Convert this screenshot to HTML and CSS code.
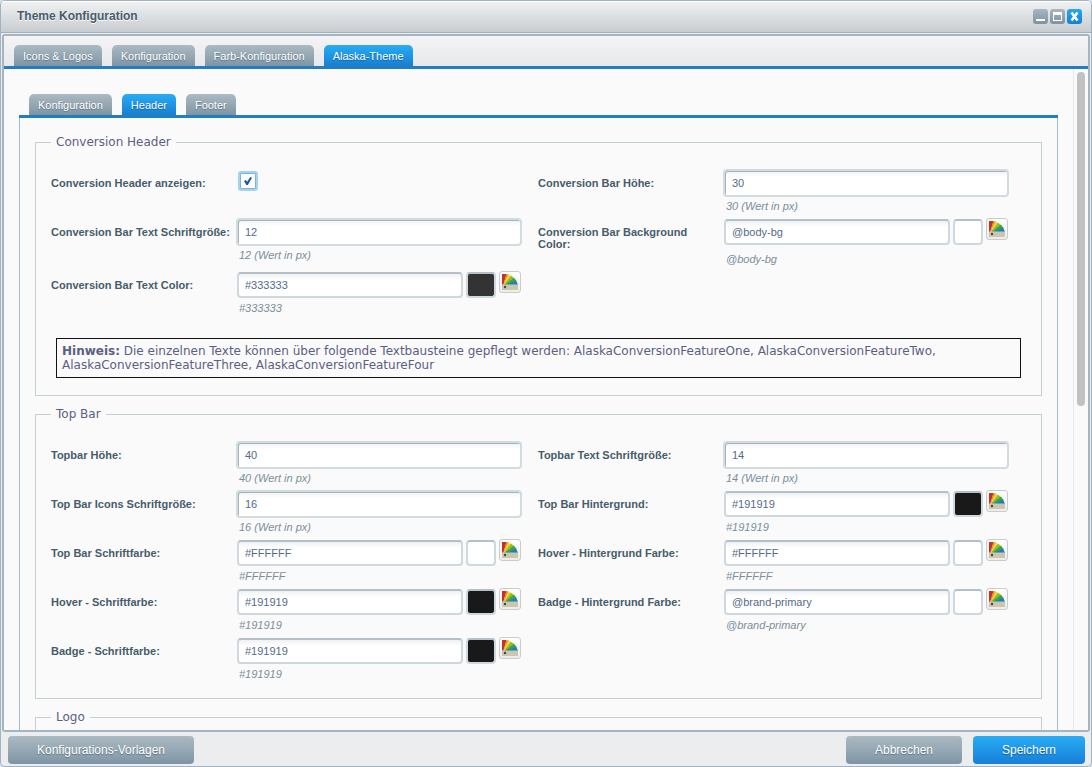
FILE: index.html
```html
<!DOCTYPE html>
<html lang="de">
<head>
<meta charset="utf-8">
<title>Theme Konfiguration</title>
<link rel="stylesheet" href="styles.css">
</head>
<body>
<svg class="defs" aria-hidden="true">
  <symbol id="fan" viewBox="0 0 16 16">
    <path d="M0 0h4.500L1 12H0z" fill="#c9302b"/>
    <path d="M4.500 0 7 .8 1 12z" fill="#e9841f"/>
    <path d="M6 .4 9.500 2 1 12z" fill="#f3d52b"/>
    <path d="M9 1.800 12.500 4.200 1 12z" fill="#8cbf2c"/>
    <path d="M12 3.800 14.500 7 1 12z" fill="#3fa044"/>
    <path d="M14.200 6.500 16 11 1 12z" fill="#1f7fb8"/>
    <path d="M0 10.500h16V16H0z" fill="#cbc6ad"/>
    <circle cx="3" cy="13" r="1.200" fill="#444"/>
  </symbol>
</svg>
<div class="window">
  <header class="titlebar">
    <h1 class="title">Theme Konfiguration</h1>
    <div class="tools">
      <button class="tool" aria-label="Minimieren"><svg viewBox="0 0 15 15"><path d="M3 10h9v2H3z" fill="#fff"/></svg></button>
      <button class="tool" aria-label="Maximieren"><svg viewBox="0 0 15 15"><path d="M3 3h9v9H3zM4 6v5h7V6z" fill="#fff" fill-rule="evenodd"/></svg></button>
      <button class="tool tool-close" aria-label="Schließen"><svg viewBox="0 0 15 15"><path d="M4.500 3.500l6 8M10.500 3.500l-6 8" stroke="#fff" stroke-width="2.600"/></svg></button>
    </div>
  </header>
  <main class="frame">
    <nav class="tabs tabs-main">
      <button class="tab">Icons &amp; Logos</button>
      <button class="tab">Konfiguration</button>
      <button class="tab">Farb-Konfiguration</button>
      <button class="tab tab-active">Alaska-Theme</button>
    </nav>
    <div class="viewport">
      <div class="content">
        <nav class="tabs tabs-sub">
          <button class="tab">Konfiguration</button>
          <button class="tab tab-active">Header</button>
          <button class="tab">Footer</button>
        </nav>
        <div class="panel">
          <fieldset class="group">
            <legend>Conversion Header</legend>
            <div class="fields">
              <div class="field"><label for="f1">Conversion Header anzeigen:</label><div class="control"><input class="check" id="f1" type="checkbox" checked></div></div>
              <div class="field"><label for="f2">Conversion Bar Höhe:</label><div class="control"><input class="text" id="f2" type="text" value="30"></div><p class="help">30 (Wert in px)</p></div>
              <div class="field"><label for="f3">Conversion Bar Text Schriftgröße:</label><div class="control"><input class="text" id="f3" type="text" value="12"></div><p class="help">12 (Wert in px)</p></div>
              <div class="field"><label for="f4">Conversion Bar Background Color:</label><div class="control"><input class="text color" id="f4" type="text" value="@body-bg"><span class="swatch"></span><button class="picker" aria-label="Farbe wählen"><svg><use href="#fan"/></svg></button></div><p class="help">@body-bg</p></div>
              <div class="field"><label for="f5">Conversion Bar Text Color:</label><div class="control"><input class="text color" id="f5" type="text" value="#333333"><span class="swatch swatch-gray"></span><button class="picker" aria-label="Farbe wählen"><svg><use href="#fan"/></svg></button></div><p class="help">#333333</p></div>
            </div>
            <p class="note"><b>Hinweis:</b> Die einzelnen Texte können über folgende Textbausteine gepflegt werden: AlaskaConversionFeatureOne, AlaskaConversionFeatureTwo, AlaskaConversionFeatureThree, AlaskaConversionFeatureFour</p>
          </fieldset>
          <fieldset class="group">
            <legend>Top Bar</legend>
            <div class="fields">
              <div class="field"><label for="t1">Topbar Höhe:</label><div class="control"><input class="text" id="t1" type="text" value="40"></div><p class="help">40 (Wert in px)</p></div>
              <div class="field"><label for="t2">Topbar Text Schriftgröße:</label><div class="control"><input class="text" id="t2" type="text" value="14"></div><p class="help">14 (Wert in px)</p></div>
              <div class="field"><label for="t3">Top Bar Icons Schriftgröße:</label><div class="control"><input class="text" id="t3" type="text" value="16"></div><p class="help">16 (Wert in px)</p></div>
              <div class="field"><label for="t4">Top Bar Hintergrund:</label><div class="control"><input class="text color" id="t4" type="text" value="#191919"><span class="swatch swatch-dark"></span><button class="picker" aria-label="Farbe wählen"><svg><use href="#fan"/></svg></button></div><p class="help">#191919</p></div>
              <div class="field"><label for="t5">Top Bar Schriftfarbe:</label><div class="control"><input class="text color" id="t5" type="text" value="#FFFFFF"><span class="swatch"></span><button class="picker" aria-label="Farbe wählen"><svg><use href="#fan"/></svg></button></div><p class="help">#FFFFFF</p></div>
              <div class="field"><label for="t6">Hover - Hintergrund Farbe:</label><div class="control"><input class="text color" id="t6" type="text" value="#FFFFFF"><span class="swatch"></span><button class="picker" aria-label="Farbe wählen"><svg><use href="#fan"/></svg></button></div><p class="help">#FFFFFF</p></div>
              <div class="field"><label for="t7">Hover - Schriftfarbe:</label><div class="control"><input class="text color" id="t7" type="text" value="#191919"><span class="swatch swatch-dark"></span><button class="picker" aria-label="Farbe wählen"><svg><use href="#fan"/></svg></button></div><p class="help">#191919</p></div>
              <div class="field"><label for="t8">Badge - Hintergrund Farbe:</label><div class="control"><input class="text color" id="t8" type="text" value="@brand-primary"><span class="swatch"></span><button class="picker" aria-label="Farbe wählen"><svg><use href="#fan"/></svg></button></div><p class="help">@brand-primary</p></div>
              <div class="field"><label for="t9">Badge - Schriftfarbe:</label><div class="control"><input class="text color" id="t9" type="text" value="#191919"><span class="swatch swatch-dark"></span><button class="picker" aria-label="Farbe wählen"><svg><use href="#fan"/></svg></button></div><p class="help">#191919</p></div>
            </div>
          </fieldset>
          <fieldset class="group group-last">
            <legend>Logo</legend>
          </fieldset>
        </div>
      </div>
      <div class="scrollbar"><div class="thumb"></div></div>
    </div>
  </main>
  <footer class="footer">
    <button class="btn btn-wide">Konfigurations-Vorlagen</button>
    <span class="spacer"></span>
    <button class="btn btn-cancel">Abbrechen</button>
    <button class="btn btn-primary">Speichern</button>
  </footer>
</div>
</body>
</html>
```
FILE: styles.css
```css
* { box-sizing: border-box; }
body {
  margin: 0;
  background: #d3e2ec;
  font-family: "Liberation Sans", Arial, sans-serif;
  font-size: 11px;
}
button, input { font: inherit; margin: 0; }
.defs { display: none; }

.window {
  display: flex;
  flex-direction: column;
  height: 100vh;
  border: 1px solid #a1b3bf;
  border-radius: 5px;
  background: #ebedef;
  overflow: hidden;
}
.titlebar {
  display: flex;
  flex: none;
  align-items: center;
  justify-content: space-between;
  height: 32px;
  padding: 0 9px 2px 16px;
  border-bottom: 1px solid #9fb1bd;
  background: linear-gradient(#f0f1f2, #c8cdd1);
  box-shadow: inset 0 1px #fff;
}
.title { margin: 0; font-size: 12px; line-height: 16px; color: #475c6a; text-shadow: 0 1px #fff; }
.tools { display: flex; gap: 2px; padding-top: 1px; }
.tool {
  width: 15px;
  height: 15px;
  padding: 0;
  border: 0;
  border-radius: 3px;
  background: linear-gradient(#a8b7c0, #7f929e);
}
.tool svg { display: block; width: 15px; height: 15px; }
.tool-close { background: linear-gradient(#25aaf2, #1580d4); }

.frame {
  display: flex;
  flex: 1;
  flex-direction: column;
  min-height: 0;
  margin: 1px 1px 0;
  border: 2px solid #a4b5c1;
  border-radius: 3px;
}
.tabs { display: flex; flex: none; gap: 10px; border-bottom: 3px solid #237dc2; }
.tabs-main { padding: 9px 10px 0; background: linear-gradient(#f4f4f5, #e6e8ea); }
.tabs-sub { padding: 25px 10px 0; }
.tab {
  height: 21px;
  padding: 1px 9px 0;
  border: 0;
  border-radius: 5px 5px 0 0;
  background: linear-gradient(#abbac3, #7f95a4);
  color: #fff;
  text-shadow: 0 1px 1px #5c7280;
  white-space: nowrap;
}
.tab-active { background: linear-gradient(#29acf4, #177fd1); text-shadow: 0 1px 1px #0d5fa3; }

.viewport { display: flex; flex: 1; min-height: 0; background: #fafafa; }
.content { flex: 1; min-width: 0; padding: 0 15px; overflow: hidden; }
.scrollbar { flex: none; width: 15px; padding: 3px; border-left: 1px solid #e6e8e9; }
.thumb { width: 8px; height: 51%; border-radius: 4px; background: #c1c1c1; }
.panel { padding: 17px 15px 0; border: 1px solid #a4b9ca; border-width: 0 1px; }

.group {
  min-width: 0;
  margin: 0 0 11px;
  padding: 20px 15px 12px;
  border: 1px solid #c5d0d5;
}
.group legend {
  padding: 0 5px;
  font: 12px/14px "DejaVu Sans", Verdana, sans-serif;
  color: #5a6081;
}
.group-last { height: 160px; }
.fields { display: grid; grid-template-columns: 1fr 1fr; padding-right: 1px; }
.field {
  display: grid;
  grid-template-columns: 185px 1fr;
  grid-template-rows: auto 1fr;
  padding-right: 16px;
}
.field label {
  padding: 8px 5px 0 0;
  font-weight: bold;
  line-height: 12px;
  color: #475c6a;
}
.control { display: flex; gap: 3px; align-items: flex-start; height: 28px; }
.text {
  flex: 1;
  min-width: 0;
  height: 28px;
  padding: 0 7px;
  border: 2px solid #d2dbdf;
  border-radius: 4px;
  background: linear-gradient(#f0f1f2, #fff 6px);
  box-shadow: inset 1px 1px #a3b3be;
  color: #556b89;
  outline: 0;
}
.color, .swatch {
  height: 26px;
  margin-top: 1px;
  border: 2px solid #cfd8dd;
  border-top-color: #b3c0c8;
  border-radius: 4px;
  box-shadow: none;
}
.color { margin-left: 1px; padding: 0 6px; }
.swatch { width: 30px; background: #fff; }
.swatch-gray { background: #333; }
.swatch-dark { background: #191919; }
.picker {
  width: 22px;
  height: 22px;
  margin-right: 1px;
  padding: 2px;
  border: 1px solid #c8cccf;
  border-radius: 3px;
  background: linear-gradient(#fff, #ececec);
}
.picker svg { display: block; width: 16px; height: 16px; }
.check {
  display: grid;
  place-items: center;
  width: 20px;
  height: 20px;
  margin: 2px;
  border: 2px solid #a8d2f1;
  border-radius: 3px;
  background: #fff;
  box-shadow: inset 0 0 0 1px #7fb2d8;
  appearance: none;
}
.check:checked::after {
  content: "";
  width: 8px;
  height: 8px;
  background: #155c9c;
  clip-path: polygon(0 50%, 22% 38%, 40% 58%, 78% 0, 100% 8%, 48% 100%, 30% 100%);
}
.help {
  grid-column: 2;
  margin: 2px 0 5px 3px;
  font-style: italic;
  line-height: 14px;
  color: #7a8f9b;
}
.note {
  margin: 18px 5px 5px;
  padding: 5px;
  border: 1px solid #111;
  font: 12px/14px "DejaVu Sans", Verdana, sans-serif;
  color: #5a6081;
}

.footer { display: flex; flex: none; align-items: center; height: 34px; padding: 1px 6px 0 7px; }
.spacer { flex: 1; }
.btn {
  height: 28px;
  border: 0;
  border-radius: 4px;
  background: linear-gradient(#abbac3, #7f95a4);
  color: #fff;
  font-size: 12px;
  text-shadow: 0 1px 1px #5c7280;
}
.btn-wide { width: 186px; }
.btn-cancel { width: 116px; margin-right: 11px; }
.btn-primary { width: 112px; background: linear-gradient(#29acf4, #177fd8); text-shadow: 0 1px 1px #0d5fa3; }
```
